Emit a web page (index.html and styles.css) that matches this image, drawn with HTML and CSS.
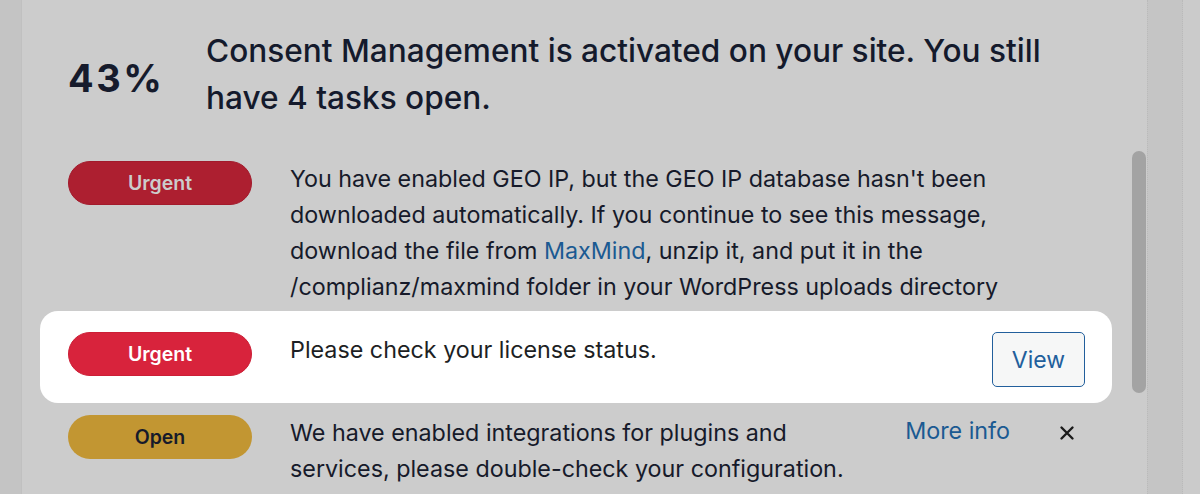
FILE: index.html
```html
<!DOCTYPE html>
<html lang="en">
<head>
<meta charset="utf-8">
<title>Consent Management progress</title>
<link rel="stylesheet" href="styles.css">
</head>
<body>
<div class="frame">
  <div class="gutter"></div>
  <main class="card">
    <header class="progress">
      <div class="percent">43%</div>
      <h1 class="title">Consent Management is activated on your site. You still have 4 tasks open.</h1>
    </header>
    <div class="tasks">
      <div class="task">
        <span class="badge badge-urgent-dim">Urgent</span>
        <p class="msg msg-wide">You have enabled GEO IP, but the GEO IP database hasn't been downloaded automatically. If you continue to see this message, download the file from <a class="link" href="#">MaxMind</a>, unzip it, and put it in the /complianz/maxmind folder in your WordPress uploads directory</p>
      </div>
      <div class="task task-highlight">
        <span class="badge badge-urgent">Urgent</span>
        <p class="msg msg-light">Please check your license status.</p>
        <button class="btn-view" type="button">View</button>
      </div>
      <div class="task task-after">
        <span class="badge badge-open">Open</span>
        <p class="msg msg-narrow">We have enabled integrations for plugins and services, please double-check your configuration.</p>
        <div class="actions">
          <a class="link more" href="#">More info</a>
          <button class="dismiss" type="button" aria-label="Dismiss">
            <svg width="16" height="16" viewBox="0 0 16 16"><path d="M2.5 2.5 L13.5 13.5 M13.5 2.5 L2.5 13.5" stroke="#1a1a1a" stroke-width="2.4" stroke-linecap="round"/></svg>
          </button>
        </div>
      </div>
    </div>
    <div class="thumb"></div>
  </main>
  <div class="strip"></div>
  <div class="edge"></div>
</div>
</body>
</html>
```

FILE: styles.css
```css
* { box-sizing: border-box; }
html, body { margin: 0; padding: 0; }
body {
  width: 1200px;
  height: 494px;
  overflow: hidden;
  background: #cbcbcb;
  font-family: Inter, "Noto Sans", "Liberation Sans", sans-serif;
  color: #161a2a;
}
.frame {
  display: flex;
  height: 494px;
}
.gutter {
  width: 22px;
  flex-shrink: 0;
  background: #c4c4c4;
  border-right: 1px solid #c0c0c0;
}
.card {
  position: relative;
  flex: 1;
  background: #cccccc;
  padding: 27px 62px 0 46px;
}
.strip {
  width: 36px;
  flex-shrink: 0;
  background: #c5c5c5;
  border-left: 1px dotted #bababa;
  border-right: 1px dotted #bababa;
}
.edge {
  width: 17px;
  flex-shrink: 0;
  background: #cbcbcb;
}
.progress {
  display: flex;
  align-items: center;
}
.percent {
  width: 138px;
  flex-shrink: 0;
  font-size: 38px;
  font-weight: 700;
  letter-spacing: 2.5px;
  color: #161b2c;
  padding-top: 8px;
}
.title {
  margin: 0;
  font-size: 31.6px;
  font-weight: 500;
  line-height: 47px;
  color: #141a2c;
}
.tasks {
  display: flex;
  flex-direction: column;
  margin-top: 40px;
}
.task {
  display: flex;
  align-items: flex-start;
}
.task-highlight {
  margin: 6px -27px 0 -28px;
  padding: 21px 27px 16px 28px;
  background: #ffffff;
  border-radius: 18px;
}
.task-after {
  margin-top: 12px;
}
.badge {
  width: 184px;
  height: 44px;
  flex-shrink: 0;
  border-radius: 22px;
  display: flex;
  align-items: center;
  justify-content: center;
  font-size: 19.5px;
  font-weight: 600;
  margin-right: 38px;
}
.badge-urgent-dim {
  background: #ad1f30;
  color: #cccccc;
  border: 1px solid #a21a2b;
}
.badge-urgent {
  background: #d8233c;
  color: #ffffff;
  border: 1px solid #cc1f36;
}
.badge-open {
  background: #c29632;
  color: #161a2a;
}
.msg {
  margin: 0;
  font-size: 23.3px;
  line-height: 36px;
  color: #161a2a;
}
.msg-wide { max-width: 760px; }
.msg-light { flex: 1; color: #1d1f24; }
.msg-narrow { flex: 1; padding-right: 30px; }
.link {
  color: #1b5a92;
  text-decoration: none;
}
.btn-view {
  width: 93px;
  height: 55px;
  flex-shrink: 0;
  border: 1.5px solid #225f9c;
  border-radius: 5px;
  background: #f6f7f7;
  color: #225f9c;
  font-family: inherit;
  font-size: 23px;
  padding: 0;
}
.actions {
  display: flex;
  align-items: center;
  gap: 49px;
  padding-right: 10px;
  height: 36px;
}
.more {
  font-size: 23.3px;
  line-height: 36px;
  margin-top: -4px;
}
.dismiss {
  border: 0;
  background: none;
  padding: 0;
  width: 16px;
  height: 16px;
  display: flex;
}
.thumb {
  position: absolute;
  right: 1px;
  top: 151px;
  width: 14px;
  height: 242px;
  border-radius: 7px;
  background: #a3a3a3;
}
```
